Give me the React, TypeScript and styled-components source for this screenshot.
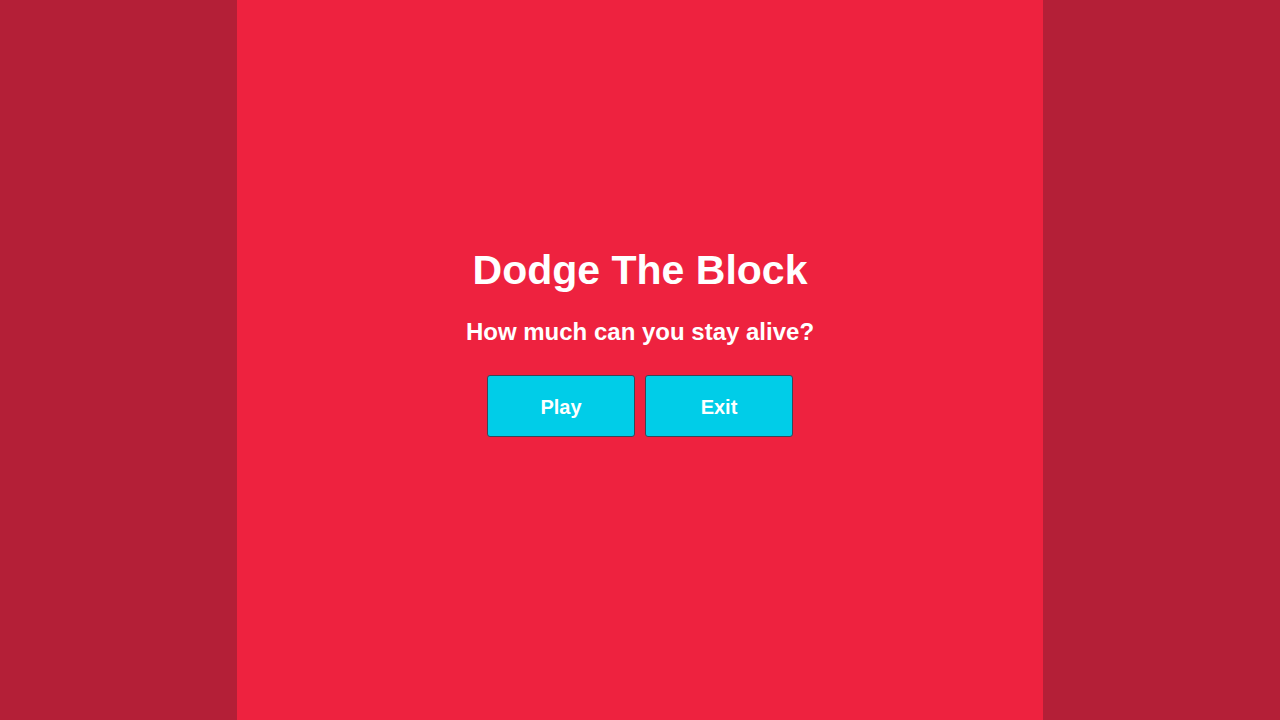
import React from "react";
import styled, { createGlobalStyle } from "styled-components";

const GlobalStyle = createGlobalStyle`
  html, body {
    margin: 0;
    padding: 0;
    background: #b41f37;
    font-family: "Liberation Sans", Arial, sans-serif;
  }
  * { box-sizing: border-box; }
`;

const Page = styled.div`
  display: flex;
  justify-content: center;
  width: 100%;
  height: 100vh;
  background: #b41f37;
`;

const Panel = styled.main`
  width: 806px;
  height: 100%;
  background: #ee223f;
  display: flex;
  flex-direction: column;
  align-items: center;
  padding-top: 247px;
  color: #ffffff;
`;

const Title = styled.h1`
  margin: 0;
  font-size: 41px;
  font-weight: 700;
  line-height: 47px;
`;

const Subtitle = styled.h2`
  margin: 24px 0 0;
  font-size: 24px;
  font-weight: 700;
  line-height: 28px;
`;

const ButtonRow = styled.div`
  display: flex;
  gap: 10px;
  margin-top: 29px;
`;

const MenuButton = styled.button`
  width: 148px;
  height: 62px;
  background: #00cde8;
  border: 1px solid #3b4656;
  border-radius: 3px;
  color: #ffffff;
  font-family: "Liberation Sans", Arial, sans-serif;
  font-size: 20px;
  font-weight: 700;
  cursor: pointer;
  padding: 2px 0 0;
`;

export default function App() {
  return (
    <>
      <GlobalStyle />
      <Page>
        <Panel>
          <Title>Dodge The Block</Title>
          <Subtitle>How much can you stay alive?</Subtitle>
          <ButtonRow>
            <MenuButton>Play</MenuButton>
            <MenuButton>Exit</MenuButton>
          </ButtonRow>
        </Panel>
      </Page>
    </>
  );
}
